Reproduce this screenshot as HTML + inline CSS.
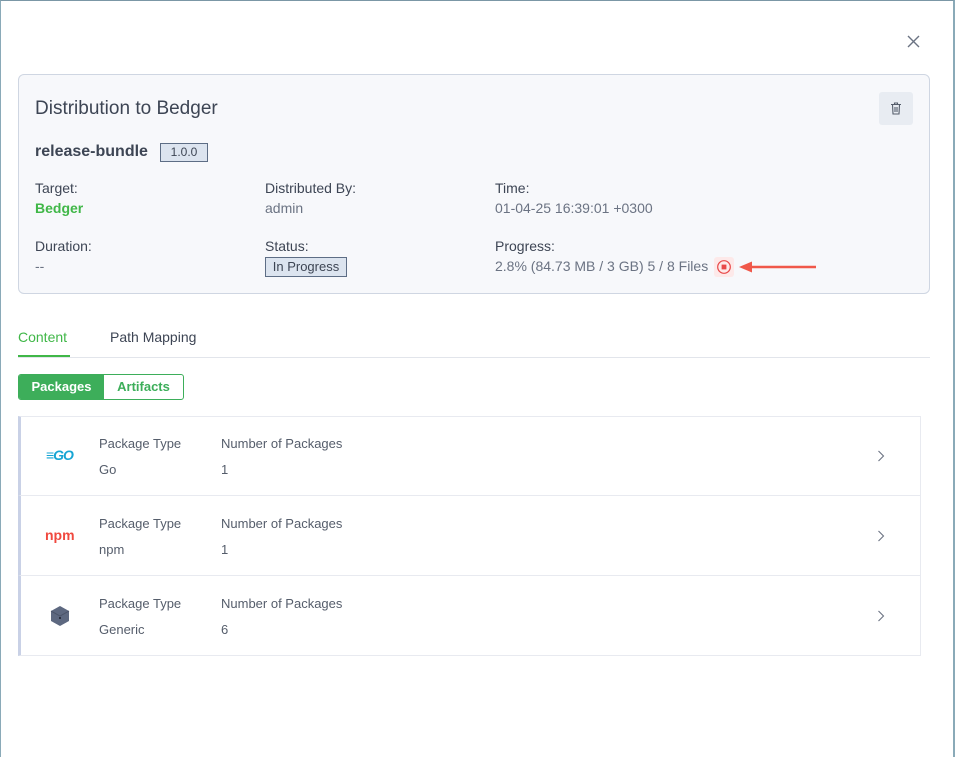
<!DOCTYPE html>
<html><head><style>
*{box-sizing:border-box;margin:0;padding:0}
body{width:955px;height:757px;background:#fff;font-family:"Liberation Sans",sans-serif;position:relative;overflow:hidden;color:#3d4554}
.frame{position:absolute;left:0;top:0;width:955px;height:757px;border-left:1px solid #8aaab8;border-right:2px solid #8aaab8;border-top:1px solid #7b97a6}
.a{position:absolute;white-space:nowrap}
.card{position:absolute;left:18px;top:74px;width:912px;height:220px;background:#f7f8fb;border:1px solid #cfd6e2;border-radius:6px}
.lbl{font-size:14px;color:#3d4554}
.val{font-size:14px;color:#6b7383}
.badge{position:absolute;border:1px solid #5d6d85;background:#dce4ef;font-size:12px;color:#3d4554;text-align:center}
.row{position:absolute;left:18px;width:903px;height:81px;border:1px solid #e8eaf0;border-left:3px solid #c9d1e6;background:#fff}
.row .t{position:absolute;font-size:13px;color:#555d6b}
</style></head><body>
<div class="frame"></div>
<svg class="a" style="left:906px;top:34px" width="15" height="15" viewBox="0 0 15 15"><path d="M2 2L13 13M13 2L2 13" stroke="#6b7383" stroke-width="1.4"/></svg>
<div class="card">
<div class="a" style="left:16px;top:23px;font-size:19px;color:#3d4554">Distribution to Bedger</div>
<div class="a" style="left:860px;top:17px;width:34px;height:33px;background:#e8ecf2;border-radius:3px"></div>
<svg class="a" style="left:871px;top:27px" width="12" height="13" viewBox="0 0 12 13"><path d="M1 2.5H11M4.5 2.5V1H7.5V2.5M2.5 2.5L3 12H9L9.5 2.5M5 5V10M7 5V10" stroke="#555d6b" stroke-width="1.1" fill="none"/></svg>
<div class="a" style="left:16px;top:68px;font-size:16px;font-weight:bold;color:#3d4554">release-bundle</div>
<div class="badge" style="left:141px;top:68px;width:48px;height:19px;line-height:17px">1.0.0</div>
<div class="a lbl" style="left:16px;top:105px">Target:</div>
<div class="a" style="left:16px;top:125px;font-size:14px;color:#40b748;font-weight:bold">Bedger</div>
<div class="a lbl" style="left:246px;top:105px">Distributed By:</div>
<div class="a val" style="left:246px;top:125px">admin</div>
<div class="a lbl" style="left:476px;top:105px">Time:</div>
<div class="a val" style="left:476px;top:125px">01-04-25 16:39:01 +0300</div>
<div class="a lbl" style="left:16px;top:163px">Duration:</div>
<div class="a val" style="left:16px;top:183px">--</div>
<div class="a lbl" style="left:246px;top:163px">Status:</div>
<div class="badge" style="left:246px;top:182px;width:82px;height:20px;line-height:18px;font-size:13px">In Progress</div>
<div class="a lbl" style="left:476px;top:163px">Progress:</div>
<div class="a val" style="left:476px;top:183px">2.8% (84.73 MB / 3 GB) 5 / 8 Files</div>
<div class="a" style="left:695px;top:182px;width:20px;height:20px;background:#fde9e9;border-radius:3px"></div>
<svg class="a" style="left:697px;top:184px" width="16" height="16" viewBox="0 0 16 16"><circle cx="8" cy="8" r="6.3" stroke="#e84848" stroke-width="1.2" fill="none"/><rect x="5.6" y="5.6" width="4.8" height="4.8" fill="#e84848"/></svg>
<svg class="a" style="left:718px;top:184px" width="82" height="16" viewBox="0 0 82 16"><path d="M12 8H79" stroke="#f0584a" stroke-width="2.5"/><path d="M2 8L15 2.5V13.5Z" fill="#f0584a"/></svg>
</div>
<div class="a" style="left:18px;top:329px;font-size:14px;color:#40b748">Content</div>
<div class="a" style="left:110px;top:329px;font-size:14px;color:#3d4554">Path Mapping</div>
<div class="a" style="left:18px;top:357px;width:912px;height:1px;background:#e2e5eb"></div>
<div class="a" style="left:18px;top:355px;width:52px;height:2px;background:#40b748"></div>
<div class="a" style="left:18px;top:374px;width:166px;height:26px;border:1px solid #3dae5a;border-radius:3px;overflow:hidden">
<div class="a" style="left:0;top:0;width:85px;height:24px;background:#3dae5a;color:#fff;font-size:13px;font-weight:bold;text-align:center;line-height:24px">Packages</div>
<div class="a" style="left:85px;top:0;width:79px;height:24px;color:#3dae5a;font-size:13px;font-weight:bold;text-align:center;line-height:24px">Artifacts</div>
</div>
<div class="row" style="top:416px">
<div class="a" style="left:25px;top:30px;font-size:14px;font-weight:bold;font-style:italic;color:#16a5d4;letter-spacing:-1px">≡GO</div>
<div class="t" style="left:78px;top:19px">Package Type</div><div class="t" style="left:78px;top:45px">Go</div>
<div class="t" style="left:200px;top:19px">Number of Packages</div><div class="t" style="left:200px;top:45px">1</div>
<svg class="a" style="left:856px;top:33px" width="8" height="12"><path d="M1.5 1L6.5 6L1.5 11" stroke="#6b7383" fill="none" stroke-width="1.1"/></svg>
</div>
<div class="row" style="top:495px">
<div class="a" style="left:24px;top:31px;font-size:14px;font-weight:bold;color:#f0493f">npm</div>
<div class="t" style="left:78px;top:20px">Package Type</div><div class="t" style="left:78px;top:46px">npm</div>
<div class="t" style="left:200px;top:20px">Number of Packages</div><div class="t" style="left:200px;top:46px">1</div>
<svg class="a" style="left:856px;top:34px" width="8" height="12"><path d="M1.5 1L6.5 6L1.5 11" stroke="#6b7383" fill="none" stroke-width="1.1"/></svg>
</div>
<div class="row" style="top:575px">
<svg class="a" style="left:29px;top:29px" width="20" height="22" viewBox="0 0 20 22"><path d="M10 1L19 6V16L10 21L1 16V6Z" fill="#5d6880"/><path d="M1 6L10 11L19 6" stroke="#4a5368" fill="none"/><rect x="9" y="12" width="2" height="2" fill="#2a3040"/></svg>
<div class="t" style="left:78px;top:20px">Package Type</div><div class="t" style="left:78px;top:46px">Generic</div>
<div class="t" style="left:200px;top:20px">Number of Packages</div><div class="t" style="left:200px;top:46px">6</div>
<svg class="a" style="left:856px;top:34px" width="8" height="12"><path d="M1.5 1L6.5 6L1.5 11" stroke="#6b7383" fill="none" stroke-width="1.1"/></svg>
</div>
</body></html>
